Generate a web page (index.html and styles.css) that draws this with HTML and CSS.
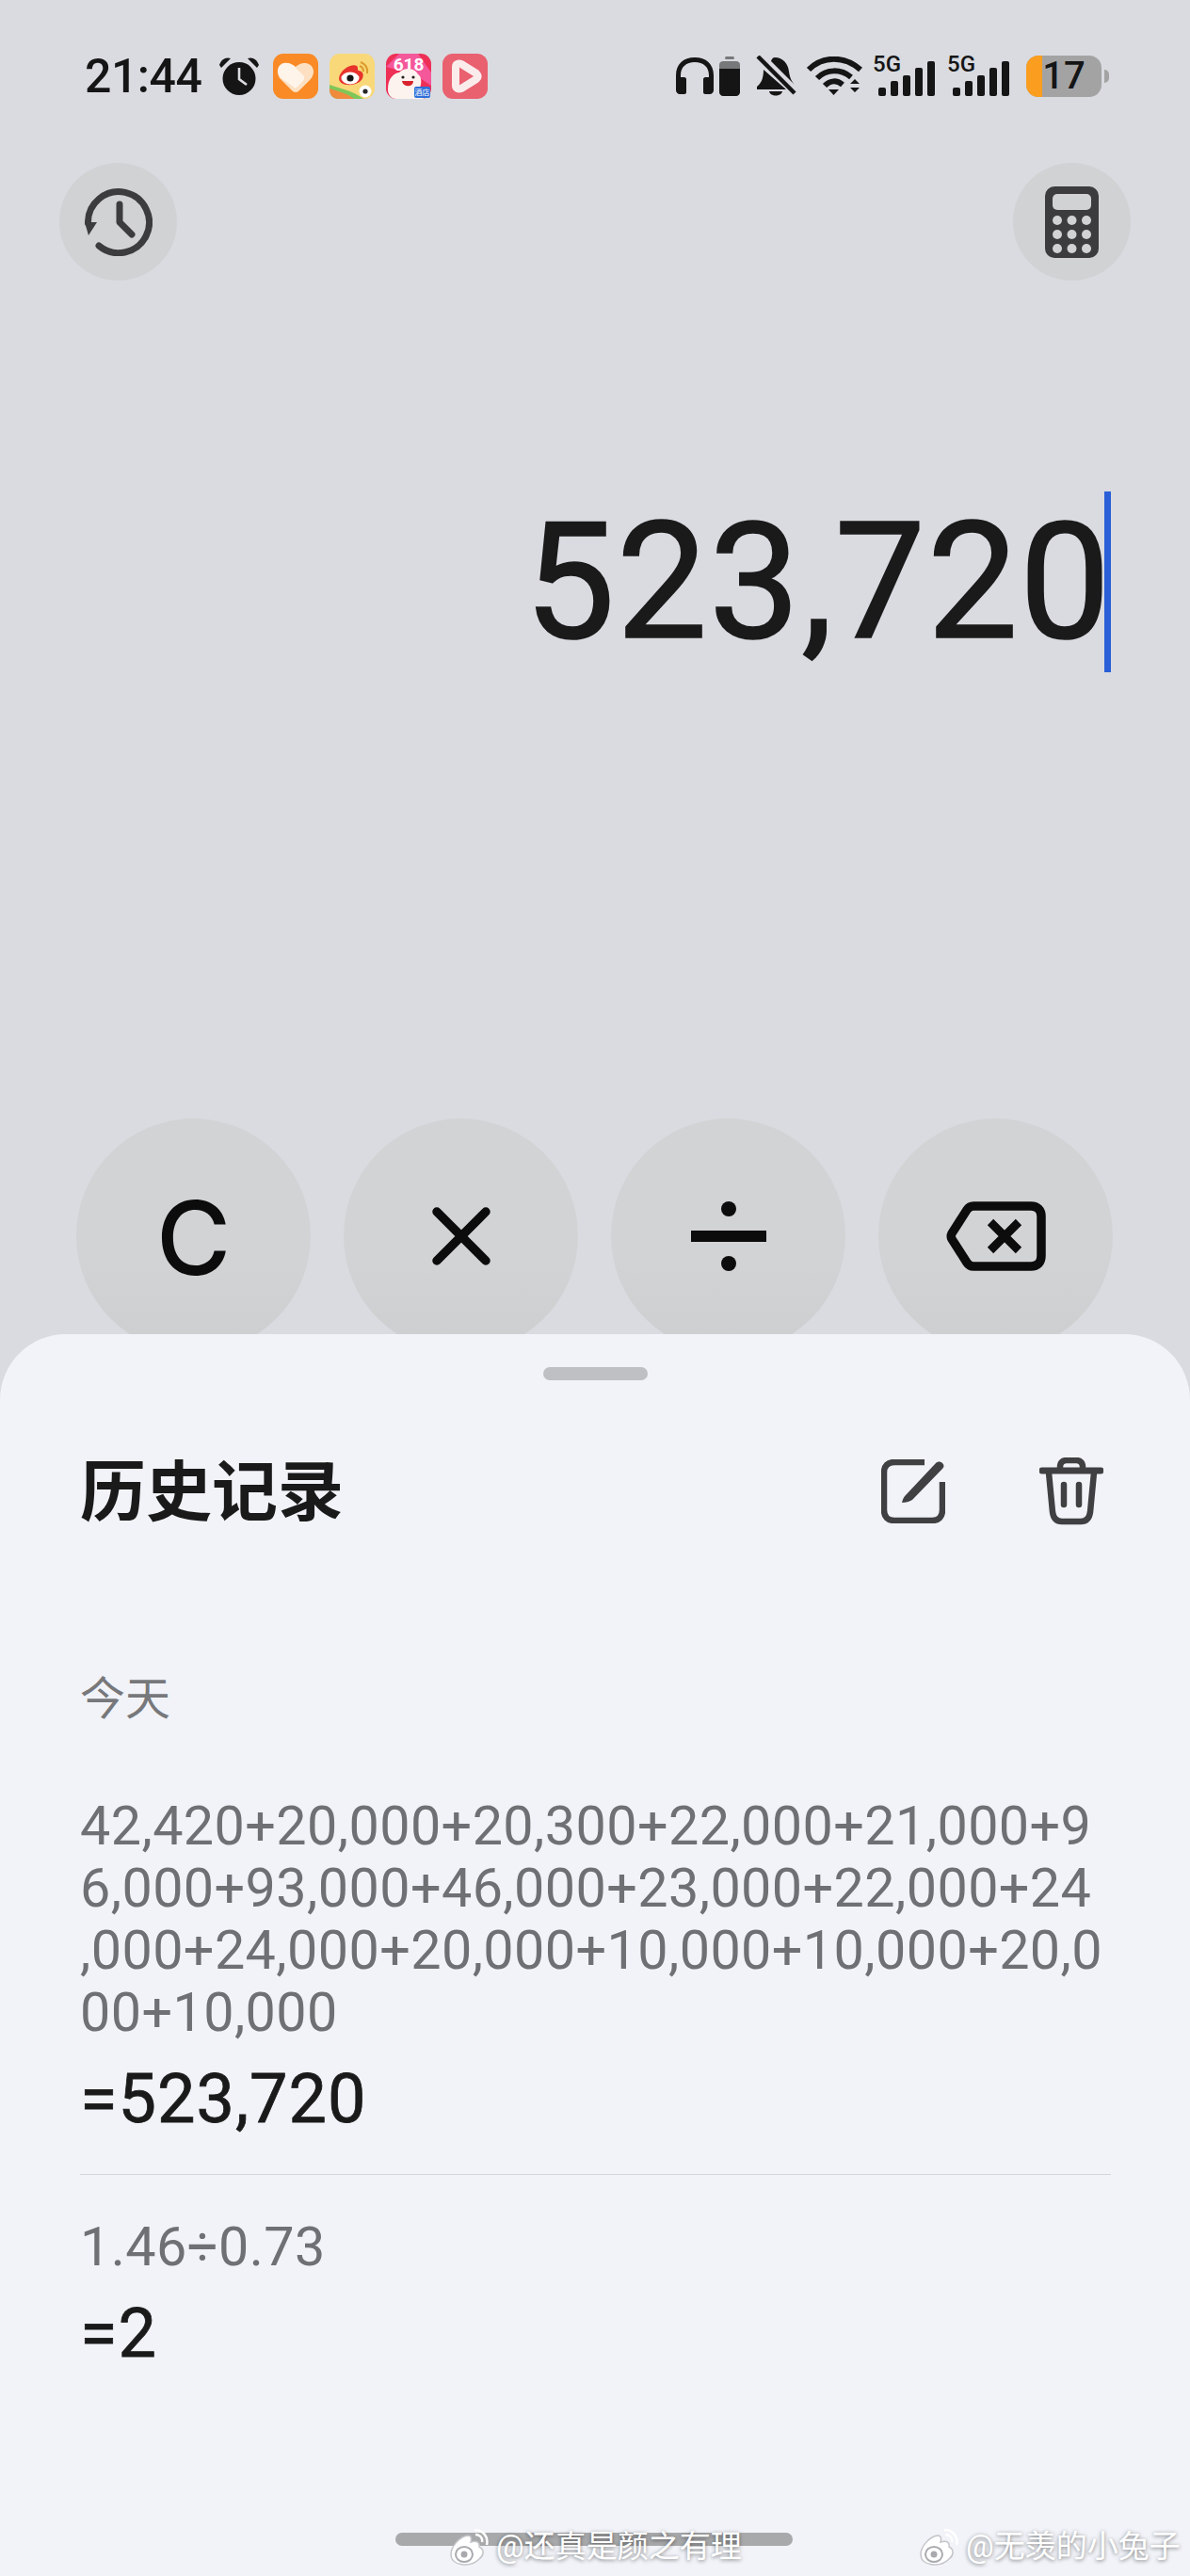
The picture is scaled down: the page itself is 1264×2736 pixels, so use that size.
FILE: index.html
```html
<!DOCTYPE html>
<html lang="zh-CN">
<head>
    <meta charset="UTF-8">
    <meta name="viewport" content="width=device-width, initial-scale=1.0">
    <title>计算器</title>
    <link rel="stylesheet" href="styles.css">
</head>
<body>
    <!-- Status bar -->
    <div class="status-bar">
        <div class="status-left">
            <span class="time">21:44</span>
            <svg class="alarm" viewBox="0 0 44 42">
                <circle cx="22" cy="23.500" r="17.500" fill="#151516"/>
                <path d="M1 9C3 3 8 0 13 2L3 12ZM43 9C41 3 36 0 31 2L41 12Z" fill="#151516"/>
                <path d="M22 12V24L30 30" fill="none" stroke="#d9dbe0" stroke-width="2.600"/>
            </svg>
            <svg class="app" viewBox="0 0 48 48">
                <rect width="48" height="48" rx="11" fill="#f98a26"/>
                <path d="M24 41C22 41 21 40 20 39L8 27C2 20 5 10 15 10C18 10 22 12 24 14C26 12 30 10 33 10C43 10 46 20 40 27L28 39C27 40 26 41 24 41Z" fill="#fde0c2"/>
                <path d="M6 22C3 14 9 9 15 10C18 10 20 12 22 13L32 23C34 25 33 28 31 30L24 37L10 27C8 26 7 24 6 22Z" fill="#fff4e9"/>
            </svg>
            <svg class="app" viewBox="0 0 48 48">
                <rect width="48" height="48" rx="11" fill="#f8d878"/>
                <path d="M0 33C12 37 26 40 36 48H10C4 48 0 44 0 38Z" fill="#7fc65a"/>
                <path d="M0 37C10 40 20 43 26 48H10C4 48 0 44 0 38Z" fill="#f08a3c"/>
                <path d="M10 26C11 17 24 10 29 13C31 15 29 18 31 18C37 19 37 25 33 29C27 35 10 35 10 26Z" fill="#e8322c"/>
                <ellipse cx="22" cy="26" rx="9.500" ry="6.500" fill="#fff"/>
                <circle cx="22" cy="26" r="3.600" fill="#151516"/>
                <path d="M33 9C38 11 41 15 40 21M32 13C35 14 36 16 36 19" fill="none" stroke="#dd9a2c" stroke-width="2"/>
                <circle cx="38" cy="40" r="6.500" fill="#fff"/>
                <circle cx="38" cy="40" r="2.600" fill="#26262a"/>
            </svg>
            <svg class="app" viewBox="0 0 48 48">
                <rect width="48" height="48" rx="11" fill="#ee2f56"/>
                <path d="M0 14L14 0H34L48 20V34L30 22Z" fill="#f4589a"/>
                <text x="24" y="18" class="app-618">618</text>
                <path d="M2 38C2 26 8 21 14 20C20 14 30 15 34 22C38 24 38 32 36 36L40 48H11C6 48 2 44 2 38Z" fill="#fdf3ee"/>
                <path d="M17 29H29C29 36 18 36 17 29Z" fill="#d8232c"/>
                <circle cx="18" cy="25" r="1.600" fill="#222"/>
                <circle cx="29" cy="25" r="1.600" fill="#222"/>
                <rect x="30" y="35" width="17" height="12" rx="2" fill="#2f6fd8"/>
                <text x="38.500" y="44" class="app-hotel">酒店</text>
            </svg>
            <svg class="app" viewBox="0 0 48 48">
                <rect width="48" height="48" rx="11" fill="#e9606f"/>
                <path d="M14 14C14 11 17 10 20 11L36 21C38 23 38 25 36 27L20 37C17 38 14 37 14 34Z" fill="none" stroke="#fbecec" stroke-width="8" stroke-linejoin="round"/>
            </svg>
        </div>
        <div class="status-right">
            <svg class="st-phones" viewBox="0 0 42 42">
                <path d="M5 40C3 40 1 38 1 36V20C1 8 9 1 21 1S41 8 41 20V36C41 38 39 40 37 40H32C31 40 30 39 30 38V24C30 23 31 22 32 22H36V20C36 11 30 6 21 6S6 11 6 20V22H10C11 22 12 23 12 24V38C12 39 11 40 10 40Z" fill="#151516"/>
            </svg>
            <svg class="st-cell" viewBox="0 0 22 42">
                <rect x="6" y="0" width="10" height="3" rx="1.500" fill="#77787a"/>
                <path d="M0 9C0 6 2 5 4 5H18C20 5 22 6 22 9V13H0Z" fill="#77787a"/>
                <path d="M0 13H22V38C22 40 20 42 18 42H4C2 42 0 40 0 38Z" fill="#151516"/>
            </svg>
            <svg class="st-bell" viewBox="0 0 44 44">
                <path d="M20 2C29 2 34 9 35 17C36 24 38 28 42 32L16 6C17 3 18 2 20 2ZM8 15L32 36H1V33C5 30 8 25 8 15ZM14 38H28C27 44 15 44 14 38Z" fill="#151516"/>
                <path d="M2 1L41 40" stroke="#151516" stroke-width="4.500"/>
            </svg>
            <svg class="st-wifi" viewBox="0 0 60 42">
                <path d="M2 14C17 -1 40 -1 57 14" fill="none" stroke="#151516" stroke-width="6"/>
                <path d="M11 23C21 13 36 13 47 22" fill="none" stroke="#151516" stroke-width="6"/>
                <path d="M19 31C25 25 32 25 38 30" fill="none" stroke="#151516" stroke-width="6"/>
                <path d="M23 35H34L28.500 41Z" fill="#151516"/>
                <path d="M46 29L51 24L56 29ZM46 33H56L51 38Z" fill="#151516"/>
            </svg>
            <div class="st-signal">
                <span class="st-5g">5G</span>
                <i class="bar bar-1"></i><i class="bar bar-2"></i><i class="bar bar-3"></i><i class="bar bar-4"></i><i class="bar bar-5"></i>
            </div>
            <div class="st-signal">
                <span class="st-5g">5G</span>
                <i class="bar bar-1"></i><i class="bar bar-2"></i><i class="bar bar-3"></i><i class="bar bar-4"></i><i class="bar bar-5"></i>
            </div>
            <div class="battery"><div class="battery-level"></div><span class="battery-num">17</span></div>
            <div class="battery-nub"></div>
        </div>
    </div>

    <!-- Top round buttons -->
    <div class="top-actions">
        <div class="round-btn">
            <svg class="ico-history" viewBox="0 0 72 72">
                <path d="M15 61A32.500 32.500 0 1 0 3.500 37" fill="none" stroke="#3c3c3e" stroke-width="7" stroke-linecap="round"/>
                <path d="M0 36H13L4 50Z" fill="#3c3c3e"/>
                <path d="M37 17V36L50 49" fill="none" stroke="#3c3c3e" stroke-width="7" stroke-linecap="round" stroke-linejoin="round"/>
            </svg>
        </div>
        <div class="round-btn">
            <svg class="ico-calc" viewBox="0 0 57 76">
                <rect width="57" height="76" rx="10" fill="#3c3c3e"/>
                <rect x="8" y="8" width="41" height="17" rx="5" fill="#d1d2d4"/>
                <g fill="#d1d2d4">
                    <circle cx="13" cy="36" r="5"/><circle cx="28.500" cy="36" r="5"/><circle cx="44" cy="36" r="5"/>
                    <circle cx="13" cy="51" r="5"/><circle cx="28.500" cy="51" r="5"/><circle cx="44" cy="51" r="5"/>
                    <circle cx="13" cy="66" r="5"/><circle cx="28.500" cy="66" r="5"/><circle cx="44" cy="66" r="5"/>
                </g>
            </svg>
        </div>
    </div>

    <!-- Current value -->
    <div class="display">
        <span class="display-value">523,720</span>
        <div class="cursor"></div>
    </div>

    <!-- Keypad, the rest of it is covered by the sheet -->
    <div class="keypad">
        <div class="key"><span class="key-c">C</span></div>
        <div class="key">
            <svg class="ico-times" viewBox="0 0 62 62">
                <path d="M5 5L57 57M57 5L5 57" stroke="#0c0c0d" stroke-width="9.500" stroke-linecap="round"/>
            </svg>
        </div>
        <div class="key">
            <svg class="ico-divide" viewBox="0 0 80 74">
                <circle cx="40" cy="8" r="8" fill="#0c0c0d"/>
                <rect y="31" width="80" height="12" fill="#0c0c0d"/>
                <circle cx="40" cy="66" r="8" fill="#0c0c0d"/>
            </svg>
        </div>
        <div class="key">
            <svg class="ico-back" viewBox="0 0 106 74">
                <path d="M29 5H90C97 5 101 9 101 16V58C101 65 97 69 90 69H29C26 69 24 68 22 65L6 40C5 38 5 36 6 34L22 9C24 6 26 5 29 5Z" fill="none" stroke="#0c0c0d" stroke-width="9.500"/>
                <path d="M47 22L77 52M77 22L47 52" stroke="#0c0c0d" stroke-width="9"/>
            </svg>
        </div>
    </div>

    <!-- History sheet -->
    <section class="sheet">
        <div class="handle"></div>
        <div class="sheet-head">
            <h1>历史记录</h1>
            <div class="sheet-tools">
                <svg class="ico-edit" viewBox="0 0 68 68">
                    <path d="M46 3H14C7 3 3 7 3 14V54C3 61 7 65 14 65H54C61 65 65 61 65 54V24" fill="none" stroke="#404042" stroke-width="6.500"/>
                    <path d="M22 46C23 42 24 40 26 38L58 4C60 2 63 2 65 4C67 6 67 8 65 10L33 43C30 45 26 46 22 46Z" fill="#404042"/>
                </svg>
                <svg class="ico-trash" viewBox="0 0 68 72">
                    <path d="M3 14H65" stroke="#404042" stroke-width="7" stroke-linecap="round"/>
                    <path d="M22 13V10C22 5 25 3 29 3H39C43 3 46 5 46 10V13" fill="none" stroke="#404042" stroke-width="6.500"/>
                    <path d="M10 16L14 58C15 65 19 68 24 68H44C49 68 53 65 54 58L58 16" fill="none" stroke="#404042" stroke-width="6.500"/>
                    <path d="M26 29V50M42 29V50" stroke="#404042" stroke-width="6.500" stroke-linecap="round"/>
                </svg>
            </div>
        </div>

        <div class="day">今天</div>

        <div class="record">
            <div class="expr">42,420+20,000+20,300+22,000+21,000+9<br>6,000+93,000+46,000+23,000+22,000+24<br>,000+24,000+20,000+10,000+10,000+20,0<br>00+10,000</div>
            <div class="result">=523,720</div>
        </div>
        <div class="record record-next">
            <div class="expr">1.46÷0.73</div>
            <div class="result">=2</div>
        </div>

        <div class="home-bar"></div>
    </section>

    <!-- Photo watermarks -->
    <div class="mark mark-a">
        <svg class="mark-logo" viewBox="0 0 44 42">
            <path d="M2 29C2 21 11 10 20 9C24 9 24 13 23 16C29 14 33 16 32 21C38 24 37 30 32 34C23 43 2 42 2 29Z" fill="#fff" stroke="#c4c5c9" stroke-width="1.500"/>
            <ellipse cx="16" cy="29" rx="9" ry="8" fill="none" stroke="#a9aaae" stroke-width="2"/>
            <circle cx="16" cy="29" r="3.500" fill="#a9aaae"/>
            <path d="M27 3C36 3 42 10 40 19M28 8C33 8 36 12 35 16" fill="none" stroke="#fff" stroke-width="2.500"/>
        </svg>
        <span>@还真是颜之有理</span>
    </div>
    <div class="mark mark-b">
        <svg class="mark-logo" viewBox="0 0 44 42">
            <path d="M2 29C2 21 11 10 20 9C24 9 24 13 23 16C29 14 33 16 32 21C38 24 37 30 32 34C23 43 2 42 2 29Z" fill="#fff" stroke="#c4c5c9" stroke-width="1.500"/>
            <ellipse cx="16" cy="29" rx="9" ry="8" fill="none" stroke="#a9aaae" stroke-width="2"/>
            <circle cx="16" cy="29" r="3.500" fill="#a9aaae"/>
            <path d="M27 3C36 3 42 10 40 19M28 8C33 8 36 12 35 16" fill="none" stroke="#fff" stroke-width="2.500"/>
        </svg>
        <span>@无羡的小兔子</span>
    </div>
</body>
</html>
```

FILE: styles.css
```css
/* Global styles */
html, body {
    margin: 0;
    padding: 0;
}

body {
    position: relative;
    width: 1264px;
    height: 2736px;
    overflow: hidden;
    background: #d9dbe0;
    color: #151516;
    font-family: Roboto, "Noto Sans CJK SC", sans-serif;
}

svg {
    display: block;
    flex: none;
}

/* Status bar */
.status-bar {
    display: flex;
    justify-content: space-between;
    align-items: center;
    height: 48px;
    padding: 57px 86px 0 90px;
}

.status-left,
.status-right {
    display: flex;
    align-items: center;
}

.time {
    width: 142px;
    font-size: 50px;
    font-weight: 500;
    line-height: 48px;
    letter-spacing: -0.5px;
}

.alarm {
    width: 44px;
    height: 42px;
    margin-right: 14px;
}

.app {
    width: 48px;
    height: 48px;
    margin-right: 12px;
}

.app:last-child {
    margin-right: 0;
}

.app-618 {
    fill: #fff;
    font-size: 19px;
    font-weight: 700;
    text-anchor: middle;
}

.app-hotel {
    fill: #fff;
    font-size: 8px;
    text-anchor: middle;
}

.st-phones {
    width: 42px;
    height: 42px;
    margin-right: 5px;
}

.st-cell {
    width: 22px;
    height: 42px;
    margin-right: 17px;
}

.st-bell {
    width: 44px;
    height: 44px;
    margin-right: 10px;
}

.st-wifi {
    width: 60px;
    height: 42px;
    margin-right: 10px;
}

.st-signal {
    position: relative;
    display: flex;
    align-items: flex-end;
    gap: 5px;
    box-sizing: border-box;
    width: 66px;
    height: 42px;
    margin-right: 13px;
    padding-left: 6px;
}

.st-5g {
    position: absolute;
    top: -5px;
    left: 0;
    font-size: 24px;
    font-weight: 500;
    line-height: 26px;
}

.bar {
    width: 8px;
    background: #151516;
    border-radius: 2px;
}

.bar-1 { height: 9px; }
.bar-2 { height: 16px; }
.bar-3 { height: 22px; }
.bar-4 { height: 30px; }
.bar-5 { height: 37px; }

.battery {
    position: relative;
    display: flex;
    justify-content: center;
    align-items: center;
    width: 80px;
    height: 44px;
    margin-left: 5px;
    background: #a3a3a4;
    border-radius: 13px;
}

.battery-level {
    position: absolute;
    top: 0;
    bottom: 0;
    left: 0;
    width: 17px;
    background: #fb9e1f;
    border-radius: 13px 0 0 13px;
}

.battery-num {
    position: relative;
    font-size: 40px;
    font-weight: 500;
    line-height: 44px;
}

.battery-nub {
    width: 5px;
    height: 14px;
    margin-left: 3px;
    background: #a3a3a4;
    border-radius: 0 5px 5px 0;
}

/* Top round buttons */
.top-actions {
    display: flex;
    justify-content: space-between;
    padding: 68px 63px 0 63px;
}

.round-btn {
    display: flex;
    justify-content: center;
    align-items: center;
    width: 125px;
    height: 125px;
    background: #d1d2d4;
    border-radius: 50%;
}

.ico-history {
    width: 72px;
    height: 72px;
}

.ico-calc {
    width: 57px;
    height: 76px;
}

/* Current value */
.display {
    display: flex;
    justify-content: flex-end;
    align-items: center;
    height: 192px;
    margin-top: 224px;
    padding-right: 84px;
}

.display-value {
    margin-right: -8px;
    font-size: 172px;
    line-height: 192px;
    letter-spacing: 1.5px;
    color: #1a1a1b;
    -webkit-text-stroke: 1.6px #1a1a1b;
}

.cursor {
    position: relative;
    width: 7px;
    height: 192px;
    background: #2a5fd8;
}

/* Keypad */
.keypad {
    display: flex;
    gap: 35px;
    height: 229px;
    margin-top: 474px;
    padding-left: 81px;
    overflow: hidden;
}

.key {
    display: flex;
    justify-content: center;
    align-items: center;
    flex: none;
    width: 249px;
    height: 249px;
    background: linear-gradient(#d2d3d5 60%, #cdced0);
    border-radius: 50%;
}

.key-c {
    margin-top: 4px;
    font-family: Inter, Roboto, sans-serif;
    font-size: 108px;
    font-weight: 500;
    line-height: 114px;
    color: #0c0c0d;
}

.ico-times {
    width: 62px;
    height: 62px;
}

.ico-divide {
    width: 80px;
    height: 74px;
}

.ico-back {
    width: 106px;
    height: 74px;
}

/* History sheet */
.sheet {
    position: relative;
    box-sizing: border-box;
    height: 1319px;
    padding: 35px 84px 0 85px;
    background: #f1f3f8;
    border-radius: 70px 70px 0 0;
}

.handle {
    width: 111px;
    height: 14px;
    margin: 0 auto;
    background: #bfc0c3;
    border-radius: 7px;
}

.sheet-head {
    display: flex;
    justify-content: space-between;
    align-items: center;
    height: 72px;
    margin-top: 82px;
}

.sheet-head h1 {
    margin: 0;
    padding-top: 3px;
    font-size: 70px;
    font-weight: 700;
    line-height: 72px;
    color: #1a1a1b;
}

.sheet-tools {
    display: flex;
    align-items: center;
    gap: 100px;
    padding-right: 8px;
}

.ico-edit {
    width: 68px;
    height: 68px;
}

.ico-trash {
    width: 68px;
    height: 72px;
}

.day {
    margin-top: 155px;
    font-size: 48px;
    line-height: 60px;
    color: #77787b;
}

/* Records */
.record {
    margin-top: 72px;
    padding-bottom: 39px;
}

.record-next {
    margin-top: 0;
    padding-top: 44px;
    border-top: 1px solid #d3d5d9;
}

.expr {
    font-size: 57.500px;
    line-height: 66px;
    letter-spacing: 0.4px;
    white-space: nowrap;
    color: #6f7074;
}

.result {
    margin-top: 19px;
    font-size: 72px;
    line-height: 80px;
    letter-spacing: 1px;
    color: #1a1a1b;
    -webkit-text-stroke: 0.8px #1a1a1b;
}

.home-bar {
    position: absolute;
    bottom: 32px;
    left: 420px;
    width: 422px;
    height: 14px;
    background: #a8a9ab;
    border-radius: 7px;
}

/* Watermarks */
.mark {
    position: absolute;
    top: 2683px;
    display: flex;
    align-items: center;
    gap: 6px;
    font-size: 33px;
    line-height: 44px;
    color: #fff;
    text-shadow: 0 1px 4px rgba(0, 0, 0, 0.5);
}

.mark-a {
    left: 477px;
}

.mark-b {
    left: 976px;
}

.mark-logo {
    width: 44px;
    height: 42px;
}
```
